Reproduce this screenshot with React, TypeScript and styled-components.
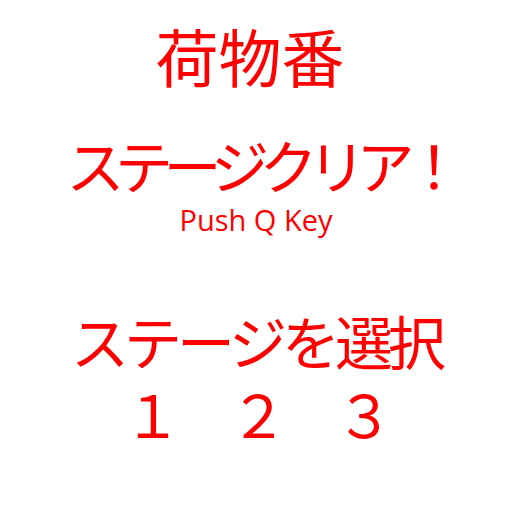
import React from "react";
import styled, { createGlobalStyle } from "styled-components";

const Global = createGlobalStyle`
  html, body { margin: 0; padding: 0; background: #ffffff; }
`;

const Screen = styled.div`
  width: 512px;
  height: 512px;
  display: flex;
  flex-direction: column;
  align-items: center;
  background: #ffffff;
  color: #ff0000;
  font-family: "Noto Sans CJK JP", "Noto Sans", sans-serif;
  overflow: hidden;
`;

const Line = styled.div<{ $size: number; $top: number; $spacing?: number; $indent?: number }>`
  font-size: ${(p) => p.$size}px;
  line-height: ${(p) => p.$size}px;
  margin-top: ${(p) => p.$top}px;
  letter-spacing: ${(p) => p.$spacing ?? 0}px;
  margin-left: ${(p) => p.$indent ?? 0}px;
  white-space: pre;
`;

const Hint = styled.div`
  font-family: "Open Sans", "Noto Sans", sans-serif;
  font-size: 29px;
  line-height: 29px;
  margin-top: 12px;
`;

export default function App() {
  return (
    <Screen>
      <Global />
      <Line $size={63} $top={23} $indent={-12}>荷物番</Line>
      <Line $size={58} $top={49} $spacing={-9.5} $indent={8}>ステージクリア！</Line>
      <Hint>Push Q Key</Hint>
      <Line $size={58} $top={77} $spacing={-5}>ステージを選択</Line>
      <Line $size={58} $top={15} $spacing={-5}>１　２　３</Line>
    </Screen>
  );
}
